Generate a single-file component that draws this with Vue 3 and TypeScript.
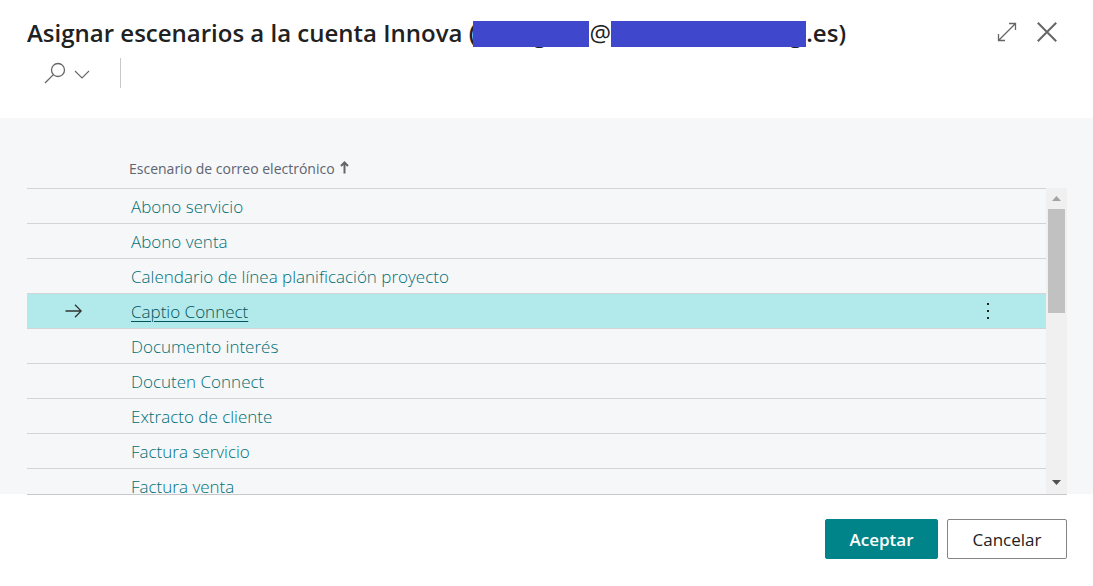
<script setup lang="ts">
import { ref } from 'vue'

const scenarios: string[] = [
  'Abono servicio',
  'Abono venta',
  'Calendario de línea planificación proyecto',
  'Captio Connect',
  'Documento interés',
  'Docuten Connect',
  'Extracto de cliente',
  'Factura servicio',
  'Factura venta',
]
const selected = ref(3)
const scroller = ref<HTMLElement | null>(null)

function scrollList(amount: number): void {
  scroller.value?.scrollBy({ top: amount })
}
</script>

<template>
  <main class="dialog" role="dialog" aria-labelledby="dialog-title">
    <header class="top">
      <h1 id="dialog-title" class="title">
        <span>Asignar escenarios a la cuenta Innova (</span><span class="mask user">g</span><span class="at">@</span><span class="mask domain">g</span><span>.es)</span>
      </h1>
      <div class="window-actions">
        <button type="button" class="icon-button" aria-label="Expandir">
          <svg width="20" height="20" viewBox="0 0 20 20"><path d="M1.500 18.500 18.500 1.500M12 1.500h6.500V8M1.500 12v6.500H8" /></svg>
        </button>
        <button type="button" class="icon-button close" aria-label="Cerrar">
          <svg width="20" height="20" viewBox="0 0 20 20"><path d="M.8.8 19.200 19.200M19.200.8.8 19.200" /></svg>
        </button>
      </div>
    </header>

    <div class="toolbar">
      <button type="button" class="search" aria-label="Buscar">
        <svg width="22" height="22" viewBox="0 0 22 22"><circle cx="14" cy="8" r="6.500" /><path d="M9.400 12.600 1 21" /></svg>
        <svg class="chevron" width="16" height="10" viewBox="0 0 16 10"><path d="m1 1 7 7 7-7" /></svg>
      </button>
      <span class="divider"></span>
    </div>

    <section class="panel">
      <div class="list">
        <div ref="scroller" class="scroller">
          <table>
            <thead>
              <tr>
                <th class="marker"></th>
                <th class="name" scope="col">
                  Escenario de correo electrónico
                  <svg class="sort" width="9" height="13" viewBox="0 0 9 13"><path d="M4.500 12.500V1.500M1 5l3.500-3.500L8 5" /></svg>
                </th>
                <th class="more"></th>
              </tr>
            </thead>
            <tbody>
              <tr v-for="(name, i) in scenarios" :key="name" :class="{ selected: i === selected }" @click="selected = i">
                <td class="marker">
                  <svg v-if="i === selected" width="17" height="14" viewBox="0 0 17 14"><path d="M.5 7h15.500M10 .8 16.200 7 10 13.200" /></svg>
                </td>
                <td class="name"><a href="#" @click.prevent>{{ name }}</a></td>
                <td class="more">
                  <button v-if="i === selected" type="button" class="dots" aria-label="Más opciones">
                    <svg width="4" height="18" viewBox="0 0 4 18"><path d="M1 1h2v2H1zM1 8h2v2H1zM1 15h2v2H1z" /></svg>
                  </button>
                </td>
              </tr>
            </tbody>
          </table>
        </div>
        <div class="scrollbar">
          <button type="button" class="arrow up" aria-label="Subir" @click="scrollList(-35)">
            <svg width="9" height="5" viewBox="0 0 9 5"><path d="M0 5 4.500 0 9 5z" /></svg>
          </button>
          <div class="track"><div class="thumb"></div></div>
          <button type="button" class="arrow down" aria-label="Bajar" @click="scrollList(35)">
            <svg width="9" height="5" viewBox="0 0 9 5"><path d="M0 0h9L4.500 5z" /></svg>
          </button>
        </div>
      </div>
    </section>

    <footer class="footer">
      <button type="button" class="action primary">Aceptar</button>
      <button type="button" class="action">Cancelar</button>
    </footer>
  </main>
</template>

<style>
body {
  margin: 0;
  background: #fff;
}
</style>

<style scoped>
.dialog {
  display: flex;
  flex-direction: column;
  height: 100vh;
  box-sizing: border-box;
  font-family: 'Segoe UI', 'Open Sans', 'Noto Sans', sans-serif;
  color: #212121;
}
button {
  font-family: inherit;
  padding: 0;
  border: 0;
  background: none;
  cursor: pointer;
}
svg {
  display: block;
  fill: none;
  stroke: #666;
  stroke-width: 1.3;
}
.top {
  display: flex;
  justify-content: space-between;
  align-items: flex-start;
  padding: 16px 36px 0 27px;
}
.title {
  display: flex;
  margin: 0;
  font-size: 24px;
  line-height: 34px;
  font-weight: 600;
  white-space: nowrap;
}
.mask {
  position: relative;
  box-sizing: border-box;
}
.mask::after {
  content: '';
  position: absolute;
  inset: 5px 0 3px;
  background: #3f48cc;
}
.user {
  width: 116px;
  padding-left: 60px;
  margin-left: -3px;
}
.at {
  width: 22px;
  font-weight: 400;
  text-align: center;
}
.domain {
  width: 195px;
  padding-left: 178px;
}
.window-actions {
  display: flex;
  gap: 20px;
  padding-top: 6px;
}
.close svg {
  stroke-width: 2;
}
.toolbar {
  display: flex;
  align-items: center;
  height: 30px;
  padding: 8px 44px 30px;
}
.search {
  display: flex;
  align-items: center;
  gap: 8px;
  width: 76px;
}
.search .chevron {
  margin-top: 4px;
  stroke-width: 1.1;
}
.divider {
  width: 1px;
  height: 30px;
  background: #c8c8cc;
}
.panel {
  flex: 1;
  display: flex;
  min-height: 0;
  padding: 30px 26px 0 27px;
  background: linear-gradient(#f5f7f9, #f5f7f9) 0 0 / 100% calc(100% - 1px) no-repeat;
}
.list {
  flex: 1;
  display: flex;
  min-width: 0;
  border-bottom: 1px solid #c8c8ca;
}
.scroller {
  flex: 1;
  overflow-y: auto;
  scrollbar-width: none;
}
table {
  width: 100%;
  border-collapse: separate;
  border-spacing: 0;
  table-layout: fixed;
}
th,
td {
  box-sizing: border-box;
  padding: 0;
  border-bottom: 1px solid #d2d4d8;
  text-align: left;
}
th {
  position: sticky;
  top: 0;
  height: 41px;
  padding-top: 2px;
  background: #f5f7f9;
  color: #5f6470;
  font-size: 14px;
  line-height: 20px;
  font-weight: 400;
}
td {
  height: 35px;
  font-size: 17px;
  line-height: 32px;
}
.marker {
  width: 102px;
}
.marker svg {
  margin-left: 38px;
  stroke: #333;
}
td.name {
  padding: 2px 0 0 2px;
  font-weight: 300;
}
.more {
  width: 117px;
}
.sort {
  display: inline-block;
  margin-left: 2px;
  stroke-width: 2;
}
a {
  color: #006f77;
  text-decoration: none;
}
.selected td {
  background: #b2e9eb;
}
.selected a {
  color: #00545c;
  text-decoration: underline;
  text-decoration-thickness: 1px;
  text-underline-offset: 3px;
}
.dots {
  display: block;
  margin-left: 57px;
}
.dots svg {
  fill: #222;
  stroke: none;
}
.scrollbar {
  display: flex;
  flex-direction: column;
  width: 21px;
  margin-top: 40px;
  background: #f0f0f0;
}
.arrow {
  display: flex;
  align-items: center;
  justify-content: center;
  height: 21px;
}
.arrow svg {
  fill: #a3a3a3;
  stroke: none;
}
.down {
  height: 23px;
}
.down svg {
  fill: #505050;
}
.track {
  flex: 1;
  padding: 0 2px;
}
.thumb {
  height: 104px;
  background: #c1c1c1;
}
.footer {
  display: flex;
  justify-content: flex-end;
  gap: 9px;
  padding: 24px 26px 27px;
}
.action {
  box-sizing: border-box;
  width: 120px;
  height: 40px;
  border: 1px solid #858585;
  border-radius: 2px;
  background: #fff;
  color: #212121;
  font-size: 17px;
  font-weight: 500;
}
.primary {
  width: 113px;
  border-color: #008489;
  background: #008489;
  color: #fff;
  font-weight: 600;
}
</style>
